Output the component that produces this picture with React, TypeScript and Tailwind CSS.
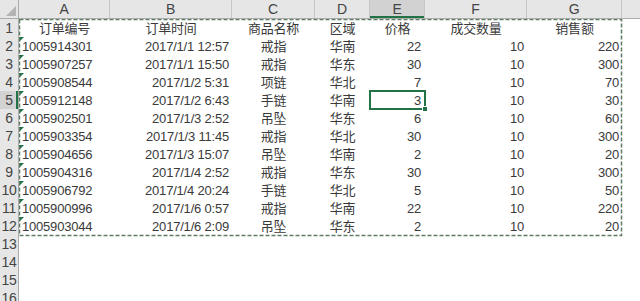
import React from 'react';

const colLetters = ['A', 'B', 'C', 'D', 'E', 'F', 'G'];
const colWidths = ['w-[91px]', 'w-[122px]', 'w-[83px]', 'w-[55px]', 'w-[55px]', 'w-[102px]', 'w-[95px]'];
const colAlign = [
  'justify-start pl-[3px]',
  'justify-end pr-[3px]',
  'justify-center',
  'justify-center',
  'justify-end pr-[4px]',
  'justify-end pr-[3px]',
  'justify-end pr-[3px]',
];

const headers = ['订单编号', '订单时间', '商品名称', '区域', '价格', '成交数量', '销售额'];

const rows = [
  ['1005914301', '2017/1/1 12:57', '戒指', '华南', '22', '10', '220'],
  ['1005907257', '2017/1/1 15:50', '戒指', '华东', '30', '10', '300'],
  ['1005908544', '2017/1/2 5:31', '项链', '华北', '7', '10', '70'],
  ['1005912148', '2017/1/2 6:43', '手链', '华南', '3', '10', '30'],
  ['1005902501', '2017/1/3 2:52', '吊坠', '华东', '6', '10', '60'],
  ['1005903354', '2017/1/3 11:45', '戒指', '华北', '30', '10', '300'],
  ['1005904656', '2017/1/3 15:07', '吊坠', '华南', '2', '10', '20'],
  ['1005904316', '2017/1/4 2:52', '戒指', '华东', '30', '10', '300'],
  ['1005906792', '2017/1/4 20:24', '手链', '华北', '5', '10', '50'],
  ['1005900996', '2017/1/6 0:57', '戒指', '华南', '22', '10', '220'],
  ['1005903044', '2017/1/6 2:09', '吊坠', '华东', '2', '10', '20'],
];

const font = "font-['Liberation_Sans','Noto_Sans_CJK_SC',sans-serif]";

// active cell is E5 -> data row index 3, column index 4
const activeDataRow = 3;
const activeCol = 4;
const activeSheetRow = 5;

const Cell = ({ value, col, isText, active }: { value: string; col: number; isText?: boolean; active?: boolean }) => (
  <div className={`relative flex h-[18px] shrink-0 items-start pt-[2px] leading-[16px] ${colWidths[col]} ${colAlign[col]}`}>
    {isText && (
      <span className="absolute left-0 top-0 h-0 w-0 border-r-[5px] border-t-[5px] border-r-transparent border-t-[#1e7145]" />
    )}
    <span className="whitespace-nowrap">{value}</span>
    {active && (
      <div className="absolute -bottom-[1px] -left-[1px] -right-[1px] -top-[1px] border-2 border-[#217346]">
        <div className="absolute -bottom-[4px] -right-[4px] h-[6px] w-[6px] border border-white bg-[#217346]" />
      </div>
    )}
  </div>
);

export default function App() {
  const rowNums = Array.from({ length: 16 }, (_, i) => i + 1);
  return (
    <div className={`h-[301px] w-[640px] overflow-hidden bg-white text-[13px] tracking-[-0.2px] text-[#3a3a3a] ${font}`}>
      {/* column header */}
      <div className="flex h-[19px] border-b border-[#ababab] bg-[#e6e6e6] text-[14px] text-[#444]">
        <div className="relative w-[19px] shrink-0 border-r border-[#ababab]">
          <span className="absolute bottom-[2px] right-[2px] h-0 w-0 border-b-[10px] border-l-[10px] border-b-[#b4b4b4] border-l-transparent" />
        </div>
        {colLetters.map((c, i) => (
          <div
            key={c}
            className={`flex shrink-0 items-center justify-center border-r border-[#c6c6c6] ${colWidths[i]} ${
              i === activeCol ? 'bg-[#d2d2d2] shadow-[inset_0_-2px_0_#217346]' : ''
            }`}
          >
            {c}
          </div>
        ))}
        <div className="flex-1" />
      </div>

      <div className="flex">
        {/* row header */}
        <div className="w-[19px] shrink-0 border-r border-[#ababab] bg-[#e6e6e6] text-[14px] text-[#444]">
          {rowNums.map((n) => (
            <div
              key={n}
              className={`flex h-[18px] items-center justify-center ${
                n === activeSheetRow ? 'bg-[#d2d2d2] shadow-[inset_-2px_0_0_#217346]' : ''
              }`}
            >
              {n}
            </div>
          ))}
        </div>

        {/* sheet */}
        <div className="relative flex-1">
          <div className="flex">
            {headers.map((h, i) => (
              <div key={h} className={`flex h-[18px] shrink-0 justify-center pt-[2px] leading-[16px] ${colWidths[i]}`}>
                {h}
              </div>
            ))}
          </div>
          {rows.map((r, ri) => (
            <div key={ri} className="flex">
              {r.map((v, ci) => (
                <Cell key={ci} value={v} col={ci} isText={ci === 0} active={ri === activeDataRow && ci === activeCol} />
              ))}
            </div>
          ))}

          {/* copy marquee */}
          <svg className="pointer-events-none absolute left-0 top-0" width="604" height="218">
            <rect x="0.5" y="0.5" width="602" height="216" fill="none" stroke="#5e7b63" strokeWidth="1.5" strokeDasharray="4 2" />
          </svg>
        </div>
      </div>
    </div>
  );
}
